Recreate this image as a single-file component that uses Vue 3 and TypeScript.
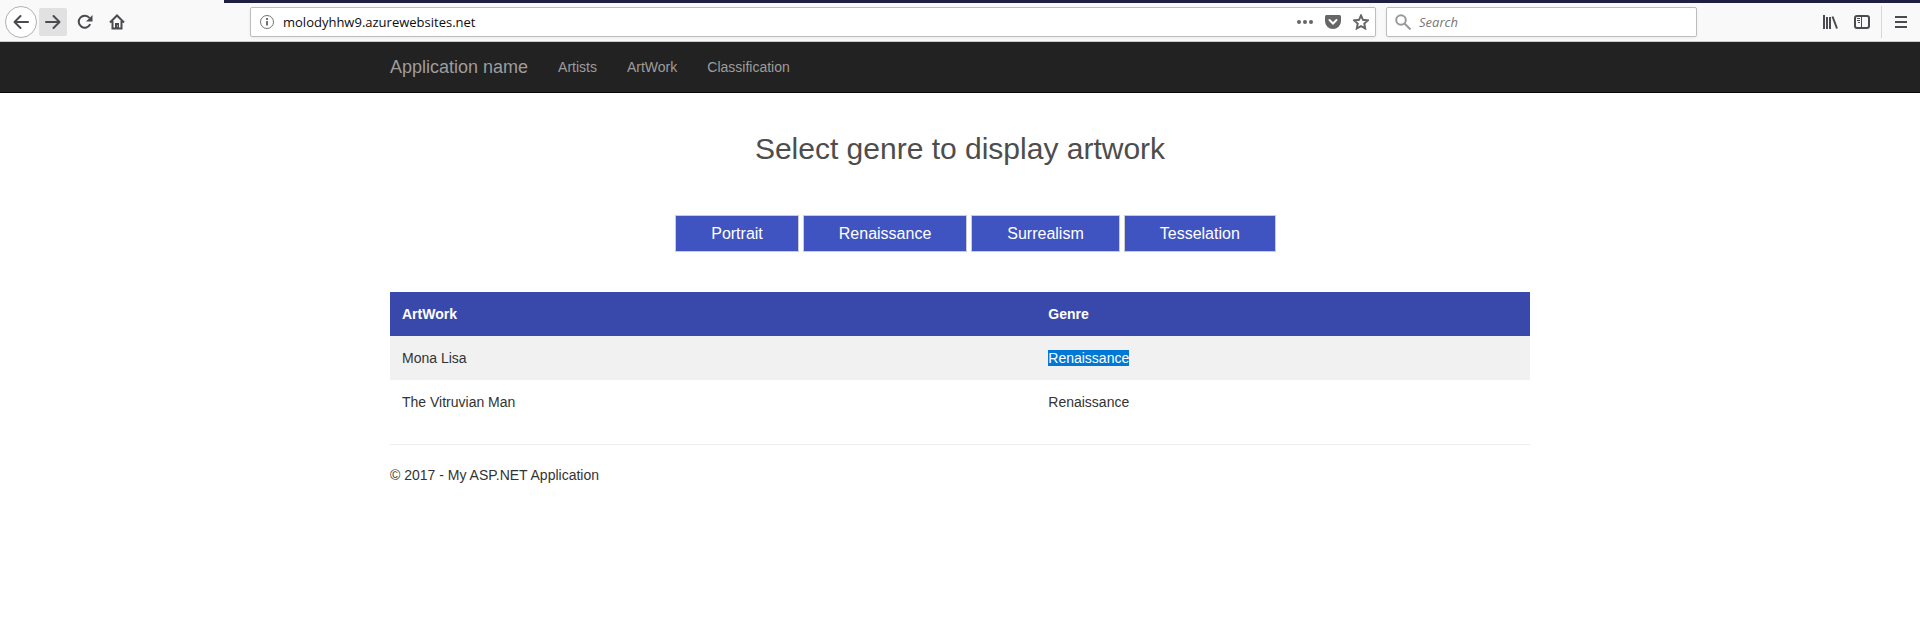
<script setup lang="ts">
import { ref } from 'vue'

interface Artwork {
  title: string
  genre: string
  selected: boolean
}

const address = ref('molodyhhw9.azurewebsites.net')
const search = ref('')
const links: string[] = ['Artists', 'ArtWork', 'Classification']
const genres: string[] = ['Portrait', 'Renaissance', 'Surrealism', 'Tesselation']
const artworks: Artwork[] = [
  { title: 'Mona Lisa', genre: 'Renaissance', selected: true },
  { title: 'The Vitruvian Man', genre: 'Renaissance', selected: false },
]
</script>

<template>
  <div class="window">
    <header class="chrome">
      <div class="strip"></div>
      <div class="toolbar">
        <div class="history">
          <button class="tool back" type="button" aria-label="Back">
            <svg width="16" height="16" viewBox="0 0 16 16"><path d="M15 8H2M7.500 2L1.500 8l6 6" /></svg>
          </button>
          <button class="tool forward" type="button" aria-label="Forward">
            <svg width="16" height="16" viewBox="0 0 16 16"><path d="M1 8h13M8.500 2l6 6-6 6" /></svg>
          </button>
        </div>
        <button class="tool" type="button" aria-label="Reload">
          <svg width="16" height="16" viewBox="0 0 16 16">
            <path d="M13.200 10.200A6 6 0 1 1 12.500 4" />
            <path class="solid" d="M15.500 1v6.500H9z" />
          </svg>
        </button>
        <button class="tool" type="button" aria-label="Home">
          <svg width="16" height="16" viewBox="0 0 16 16">
            <path d="M1 8.500L8 1.500l7 7M3.500 7v7.500h9V7" />
            <path class="solid" d="M6 15V9h4v6z" />
            <path class="knob" d="M8 11.500h1v1H8z" />
          </svg>
        </button>
        <div class="spacer"></div>
        <div class="field address">
          <svg class="info" width="16" height="16" viewBox="0 0 16 16">
            <circle cx="8" cy="8" r="6.500" />
            <path d="M8 7v4.500M8 4v2" />
          </svg>
          <input v-model="address" type="text" aria-label="Address" />
          <button class="page-action" type="button" aria-label="Page actions">
            <svg width="16" height="16" viewBox="0 0 16 16">
              <circle class="solid" cx="2" cy="8" r="2" /><circle class="solid" cx="8" cy="8" r="2" /><circle class="solid" cx="14" cy="8" r="2" />
            </svg>
          </button>
          <button class="page-action" type="button" aria-label="Save to Pocket">
            <svg width="16" height="16" viewBox="0 0 16 16">
              <path class="solid" d="M1.500 1h13Q16 1 16 2.500V7a8 8 0 0 1-16 0V2.500Q0 1 1.500 1z" />
              <path class="tick" d="M4.500 6L8 9.500 11.500 6" />
            </svg>
          </button>
          <button class="page-action" type="button" aria-label="Bookmark">
            <svg width="16" height="16" viewBox="0 0 16 16">
              <path d="M8 1.500l2 4.300 4.800.600-3.500 3.200.9 4.900L8 12.200l-4.200 2.300.9-4.900L1.200 6.400 6 5.800z" />
            </svg>
          </button>
        </div>
        <div class="field search">
          <svg class="lens" width="16" height="16" viewBox="0 0 16 16">
            <circle cx="6" cy="6" r="4.800" /><path d="M9.500 9.500l6 6" />
          </svg>
          <input v-model="search" type="text" placeholder="Search" aria-label="Search" />
        </div>
        <div class="spacer"></div>
        <button class="tool" type="button" aria-label="Library">
          <svg width="16" height="16" viewBox="0 0 16 16">
            <path d="M2 1v14M5 3v12M8 3v12M10.500 2.500l4.500 12" />
          </svg>
        </button>
        <button class="tool" type="button" aria-label="Sidebars">
          <svg width="16" height="16" viewBox="0 0 16 16">
            <rect x="1" y="2" width="14" height="12" rx="2" />
            <path class="fine" d="M7.500 2v12M3 4.500h3M3 6.500h3M4 8.500h2" />
          </svg>
        </button>
        <div class="divider"></div>
        <button class="tool" type="button" aria-label="Menu">
          <svg width="16" height="16" viewBox="0 0 16 16"><path d="M2 3h12M2 8h12M2 13h12" /></svg>
        </button>
      </div>
    </header>

    <nav class="navbar">
      <div class="container nav-row">
        <a class="brand" href="#">Application name</a>
        <a v-for="link in links" :key="link" class="nav-link" href="#">{{ link }}</a>
      </div>
    </nav>

    <main class="container">
      <h2>Select genre to display artwork</h2>
      <div class="genres">
        <button v-for="genre in genres" :key="genre" type="button">{{ genre }}</button>
      </div>
      <table>
        <thead>
          <tr>
            <th scope="col">ArtWork</th>
            <th scope="col">Genre</th>
          </tr>
        </thead>
        <tbody>
          <tr v-for="item in artworks" :key="item.title">
            <td>{{ item.title }}</td>
            <td><span :class="{ selected: item.selected }">{{ item.genre }}</span></td>
          </tr>
        </tbody>
      </table>
      <footer>© 2017 - My ASP.NET Application</footer>
    </main>
  </div>
</template>

<style>
body {
  margin: 0;
  background: #fff;
}
</style>

<style scoped>
.window {
  font: 14px/20px "Liberation Sans", Arial, sans-serif;
  color: #333;
}

.window * {
  box-sizing: border-box;
}

/* Browser toolbar */
.chrome {
  background: #f9f9fa;
  border-bottom: 1px solid #ccc;
}

.strip {
  height: 3px;
  margin-left: 224px;
  background: #1f1f41;
}

.toolbar {
  display: flex;
  align-items: center;
  height: 38px;
  padding: 0 5px;
  gap: 4px;
}

.history {
  display: flex;
  align-items: center;
  gap: 2px;
}

button {
  font: inherit;
  cursor: pointer;
}

svg {
  display: block;
  fill: none;
  stroke: #4a4a4f;
  stroke-width: 2;
}

.solid {
  fill: #4a4a4f;
  stroke: none;
}

.knob {
  fill: #f9f9fa;
  stroke: none;
}

.fine {
  stroke-width: 1;
}

.tool {
  display: grid;
  place-items: center;
  flex: none;
  width: 28px;
  height: 28px;
  padding: 0;
  border: 0;
  border-radius: 2px;
  background: transparent;
}

.history svg {
  stroke-linecap: round;
  stroke-linejoin: round;
}

.back {
  width: 32px;
  height: 32px;
  border: 1px solid #b1b1b1;
  border-radius: 50%;
  background: #fff;
}

.forward {
  background: #e1e1e1;
}

.spacer {
  flex: 111 1 0;
}

.field {
  display: flex;
  align-items: center;
  height: 30px;
  border: 1px solid #bdbdbd;
  border-radius: 2px;
  background: #fff;
  box-shadow: 0 1px 3px rgba(0, 0, 0, 0.06);
}

.address {
  flex: 1116 1 0;
  padding-left: 8px;
}

.search {
  flex: 293 1 0;
  margin-left: 6px;
  padding: 0 8px;
}

input {
  flex: 1;
  min-width: 0;
  height: 28px;
  padding: 0;
  border: 0;
  outline: 0;
  background: transparent;
  color: #0c0c0d;
  font: 13px "Open Sans", "Noto Sans", sans-serif;
}

.field input {
  margin-left: 8px;
}

input::placeholder {
  color: #777;
  opacity: 1;
  font-style: italic;
}

.info {
  stroke: #737373;
  stroke-width: 1;
}

.info path {
  stroke-width: 2;
}

.lens {
  stroke: #999;
}

.page-action {
  display: grid;
  place-items: center;
  width: 28px;
  height: 28px;
  padding: 0;
  border: 0;
  background: transparent;
}

.page-action svg {
  stroke: #666;
}

.page-action .solid {
  fill: #666;
  stroke: none;
}

.page-action .tick {
  stroke: #fff;
  stroke-linecap: round;
}

.divider {
  width: 1px;
  height: 32px;
  margin: 0 1px;
  background: #d7d7db;
}

/* Site */
.container {
  max-width: 1140px;
  margin: 0 auto;
}

.navbar {
  background: #222;
  border-bottom: 1px solid #080808;
}

.nav-row {
  display: flex;
  align-items: center;
  height: 50px;
}

.brand,
.nav-link {
  color: #9d9d9d;
  text-decoration: none;
}

.brand {
  margin-right: 15px;
  font-size: 18px;
}

.nav-link {
  padding: 0 15px;
}

h2 {
  margin: 0;
  padding: 39px 0 50px;
  color: #4d4d4d;
  font-size: 30px;
  font-weight: 400;
  line-height: 33px;
  text-align: center;
}

.genres {
  display: flex;
  justify-content: center;
  gap: 4px;
  margin-bottom: 40px;
  padding-left: 31px;
}

.genres button {
  height: 37px;
  padding: 0 35px;
  border: 1px solid #ccc;
  background: #3f54c1;
  color: #fff;
  font-size: 16px;
}

table {
  width: 100%;
  border-collapse: collapse;
}

th,
td {
  padding: 12px;
  text-align: left;
}

th {
  background: #3949ab;
  color: #fff;
}

tbody tr:nth-child(odd) {
  background: #f1f1f1;
}

.selected {
  background: #0078d7;
  color: #fff;
}

footer {
  margin-top: 20px;
  padding: 20px 0;
  border-top: 1px solid #eee;
}
</style>
